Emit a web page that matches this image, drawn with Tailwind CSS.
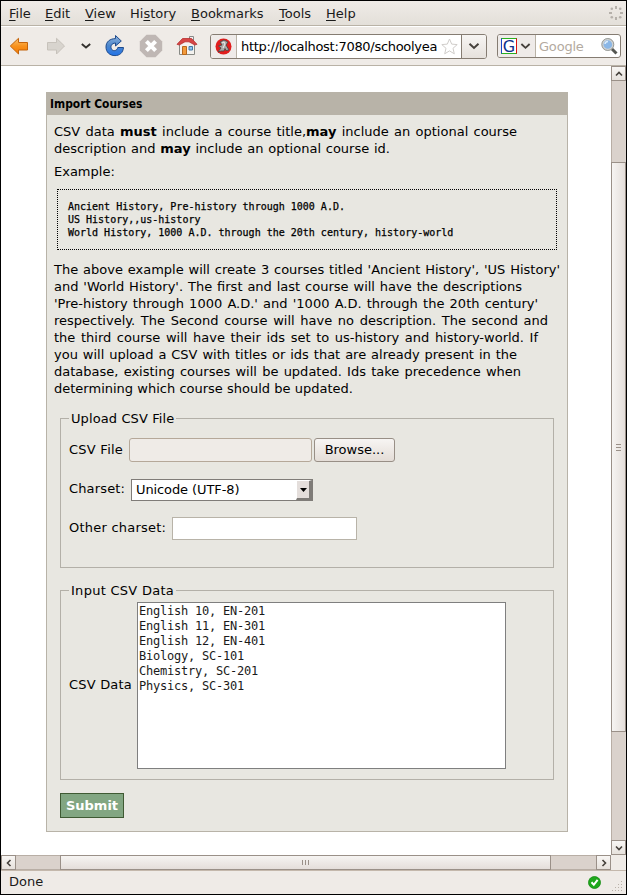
<!DOCTYPE html>
<html lang="en">
<head>
<meta charset="utf-8">
<title>Import Courses</title>
<script src="https://cdn.jsdelivr.net/npm/@tailwindcss/browser@4"></script>
</head>
<body class="w-[627px] h-[895px] overflow-hidden bg-white text-black text-[13px] leading-[17px] font-['DejaVu_Sans',sans-serif]">
<div class="w-[627px] h-[895px] border border-black flex flex-col">
  <!-- Menu bar -->
  <nav class="h-[25px] shrink-0 flex items-center bg-linear-to-b from-[#efebe7] to-[#e3dfd9] border-b border-[#b9b2a6] pl-[8px] pr-[2px] text-[13px] text-[#1a1a1a]">
    <span class="w-[36px]"><u class="underline-offset-2">F</u>ile</span>
    <span class="w-[40px]"><u class="underline-offset-2">E</u>dit</span>
    <span class="w-[45px]"><u class="underline-offset-2">V</u>iew</span>
    <span class="w-[61px]">Hi<u class="underline-offset-2">s</u>tory</span>
    <span class="w-[88px]"><u class="underline-offset-2">B</u>ookmarks</span>
    <span class="w-[47px]"><u class="underline-offset-2">T</u>ools</span>
    <span><u class="underline-offset-2">H</u>elp</span>
    <svg class="ml-auto" width="16" height="16" viewBox="0 0 16 16" fill="#b5b0aa"><rect x="7" y="1" width="2" height="3"/><rect x="7" y="12" width="2" height="3"/><rect x="1" y="7" width="3" height="2"/><rect x="12" y="7" width="3" height="2"/><circle cx="3.8" cy="3.8" r="1.3"/><circle cx="12.2" cy="3.8" r="1.3"/><circle cx="3.8" cy="12.2" r="1.3"/><circle cx="12.2" cy="12.2" r="1.3"/></svg>
  </nav>
  <!-- Toolbar -->
  <div class="h-[40px] shrink-0 flex items-center bg-[#efebe7] border-t border-t-white border-b border-b-[#b9b2a6] pl-[8px]">
    <svg width="20" height="20" viewBox="0 0 20 20"><defs><linearGradient id="o" x2="0" y2="1"><stop stop-color="#fcc26b"/><stop offset=".5" stop-color="#f8921e"/><stop offset="1" stop-color="#f57900"/></linearGradient><linearGradient id="b" x2="0" y2="1"><stop stop-color="#8fb3dc"/><stop offset=".5" stop-color="#4d87cc"/><stop offset="1" stop-color="#2273e8"/></linearGradient></defs><path d="M1.3 10 9.5 2.3V6.500H18.500V14H9.500V18Z" fill="url(#o)" stroke="#c4640c" stroke-linejoin="round"/></svg>
    <svg class="ml-[17px]" width="20" height="20" viewBox="0 0 20 20"><path d="M18.500 10 10.500 2.300V6.500H1.500V14H10.500V18Z" fill="#d8d4ce" stroke="#c7c2bb" stroke-linejoin="round"/></svg>
    <svg class="ml-[14px]" width="12" height="8" viewBox="0 0 12 8"><path d="M1.800 2 6 5.500 10.200 2" fill="none" stroke="#33302d" stroke-width="1.900"/></svg>
    <svg class="ml-[12px]" width="22" height="24" viewBox="0 0 22 24"><path d="M11.500 1.500 17.300 7 11.500 12V9C7.500 9.300 6.500 12 7.200 14.300 8.300 17.700 13 17.300 13.800 13.500H19.500C19 19 15.500 21.600 11 21.600 5.500 21.600 2 18 2 13 2 7.600 6 4.700 11.500 4.600Z" fill="url(#b)" stroke="#1f4b8c" stroke-linejoin="round"/></svg>
    <svg class="ml-[13px]" width="24" height="24" viewBox="0 0 24 24"><path d="M7.500 .8h9L23.200 7.500v9L16.500 23.200h-9L.8 16.500v-9Z" fill="#bfb7b4"/><path d="m7.400 7.400 9.200 9.200m0-9.200-9.200 9.200" stroke="#fff" stroke-width="4"/></svg>
    <svg class="ml-[13px]" width="22" height="22" viewBox="0 0 22 22"><path d="M13.500 1.500h4V7h-4Z" fill="#eee" stroke="#888"/><path d="M3.500 9 11 5l7.500 4v10.500h-15Z" fill="#f4f2ef" stroke="#888a85"/><path d="M1 9.300 6.500 3.500h9L21 9.300l-2.200.7L13 6.800H9L3.200 10Z" fill="#d64545" stroke="#b93030" stroke-width=".8" stroke-linejoin="round"/><path d="M6.500 11.500h4v8h-4Z" fill="#f29a3b" stroke="#b8671a"/><path d="M13 11.500h3.500V15H13Z" fill="#8ec5ee" stroke="#4179a8"/></svg>
    <!-- Address field -->
    <div class="ml-[12px] w-[277px] h-[25px] flex items-center border border-[#857c72] rounded-[3px] bg-white">
      <div class="w-[26px] h-[23px] shrink-0 rounded-l-[2px] bg-[#efebe9] border-r border-[#b9b2a6] flex items-center justify-center">
        <svg width="17" height="17" viewBox="0 0 17 17"><circle cx="8.500" cy="8.500" r="8" fill="#e11d1d"/><path d="m5 4 4-2 4 2-2 3 3 5-3 .5-1-2-1 2.500H6l-3 1 3-4-2.500-2L7 7Z" fill="#a9aaa7" stroke="#444" stroke-width=".8"/><path d="m7 5 2-1 1 2-2 4" fill="none" stroke="#eee"/></svg>
      </div>
      <span class="pl-[4px] w-[199px] whitespace-nowrap text-[13px] tracking-[-0.3px]">http://localhost:7080/schoolyea</span>
      <svg class="ml-[5px] shrink-0" width="17" height="17" viewBox="0 0 17 17"><path d="m8.500 1 2.200 5.100 5.500.5-4.200 3.700 1.300 5.500-4.800-2.900-4.800 2.900L5 10.300.8 6.600l5.500-.5Z" fill="#fff" stroke="#d0cdca"/></svg>
      <div class="ml-auto w-[25px] h-[23px] shrink-0 rounded-r-[2px] border-l border-[#857c72] bg-linear-to-b from-[#f7f5f3] to-[#e6e1dc] flex items-center justify-center"><svg width="12" height="8" viewBox="0 0 12 8"><path d="M1.500 1.800 6 6 10.500 1.800" fill="none" stroke="#45403b" stroke-width="2"/></svg></div>
    </div>
    <!-- Search field -->
    <div class="ml-[10px] w-[124px] h-[24px] flex items-center border border-[#857c72] rounded-[3px] bg-white">
      <div class="w-[38px] h-[22px] shrink-0 rounded-l-[2px] bg-[#efebe9] border-r border-[#b9b2a6] flex items-center pl-[3px]">
        <span class="w-[16px] h-[16px] bg-white border border-t-[#2ab01f] border-b-[#2ab01f] border-l-[#1a48c8] border-r-[#dd1111] text-[#10308c] text-[16px] leading-[15px] text-center flex justify-center">G</span>
        <svg class="ml-[3px]" width="11" height="8" viewBox="0 0 12 8"><path d="M1.500 1.800 6 6 10.500 1.800" fill="none" stroke="#45403b" stroke-width="2"/></svg>
      </div>
      <span class="pl-[3px] text-[13px] tracking-[-0.2px] text-[#b3aaa0]">Google</span>
      <svg class="ml-auto mr-[2px]" width="17" height="17" viewBox="0 0 17 17"><path d="m10.500 10.500 5 5" stroke="#555753" stroke-width="3"/><circle cx="6.800" cy="6.500" r="5.300" fill="#8bb7e6" stroke="#cfd2d3" stroke-width="2"/><circle cx="6.800" cy="6.500" r="6" fill="none" stroke="#888a85" stroke-width=".8"/><path d="M4 6a3 3 0 0 1 3-2.500" fill="none" stroke="#dcecfb" stroke-width="1.500"/></svg>
    </div>
  </div>
  <!-- Viewport -->
  <div class="h-[789px] shrink-0 flex">
    <main class="w-[610px] h-[789px] overflow-hidden pt-[26px] pl-[45px]">
      <section class="w-[522px] h-[740px] bg-[#e8e7e1] border border-[#b8b3a8]">
        <h1 class="h-[22px] bg-[#b8b3a8] pl-[3px] text-[13px] leading-[22px] font-bold font-['DejaVu_Sans_Condensed','DejaVu_Sans',sans-serif]"><span class="inline-block origin-left scale-x-[.915]">Import Courses</span></h1>
        <div class="pl-[7px] pt-[8px]">
          <p class="whitespace-nowrap"><span class="block w-[463px] [text-align-last:justify]">CSV data <b>must</b> include a course title,<b>may</b> include an optional course</span><span class="block w-[336px] [text-align-last:justify]">description and <b>may</b> include an optional course id.</span></p>
          <p class="mt-[6px]">Example:</p>
          <pre class="mt-[9px] ml-[3px] w-[500px] h-[61px] border border-dotted border-black p-[10px] text-[10px] leading-[13px] font-['DejaVu_Sans_Mono',monospace] [-webkit-text-stroke:0.25px_black]">Ancient History, Pre-history through 1000 A.D.
US History,,us-history
World History, 1000 A.D. through the 20th century, history-world</pre>
          <p class="mt-[11px] whitespace-nowrap"><span class="block w-[506px] [text-align-last:justify]">The above example will create 3 courses titled 'Ancient History', 'US History'</span><span class="block w-[468px] [text-align-last:justify]">and 'World History'. The first and last course will have the descriptions</span><span class="block w-[484px] [text-align-last:justify]">'Pre-history through 1000 A.D.' and '1000 A.D. through the 20th century'</span><span class="block w-[494px] [text-align-last:justify]">respectively. The Second course will have no description. The second and</span><span class="block w-[484px] [text-align-last:justify]">the third course will have their ids set to us-history and history-world. If</span><span class="block w-[463px] [text-align-last:justify]">you will upload a CSV with titles or ids that are already present in the</span><span class="block w-[467px] [text-align-last:justify]">database, existing courses will be updated. Ids take precedence when</span><span class="block w-[299px] [text-align-last:justify]">determining which course should be updated.</span></p>
        </div>
        <fieldset class="ml-[13px] mt-[13px] w-[494px] h-[158px] border border-[#b3b0a8] pl-[8px]">
          <legend class="px-[2px] h-[17px] tracking-[0.1px]">Upload CSV File</legend>
          <div class="mt-[11px] h-[23px] flex items-center">
            <label class="w-[60px] tracking-[0.25px]">CSV File</label>
            <div class="w-[183px] h-[24px] border border-[#b5a899] rounded-[3px] bg-[#efebe7]"></div>
            <button class="ml-[2px] w-[81px] h-[24px] border border-[#988f86] rounded-[3px] bg-linear-to-b from-[#f7f5f3] to-[#e4ddd7] text-[13px]">Browse...</button>
          </div>
          <div class="mt-[18px] h-[22px] flex items-center">
            <label class="w-[62px] tracking-[0.15px] pb-[3px]">Charset:</label>
            <div class="w-[182px] h-[22px] border border-[#7f7c78] bg-white flex justify-between pl-[4px]">
              <span class="leading-[20px] tracking-[-0.1px]">Unicode (UTF-8)</span>
              <span class="w-[16px] h-[20px] bg-[#e4dedb] border-t border-l border-white border-r-[3px] border-b-2 border-r-[#7f7c78] border-b-[#7f7c78] flex items-center justify-center"><svg width="7" height="4" viewBox="0 0 7 4"><path d="M0 0h7L3.500 4Z"/></svg></span>
            </div>
          </div>
          <div class="mt-[16px] h-[23px] flex items-center">
            <label class="w-[103px] tracking-[0.23px] pb-[2px]">Other charset:</label>
            <div class="w-[185px] h-[23px] border border-[#b8b3a8] bg-white"></div>
          </div>
        </fieldset>
        <fieldset class="ml-[13px] mt-[14px] w-[494px] h-[198px] border border-[#b3b0a8] pl-[8px]">
          <legend class="px-[2px] h-[17px] tracking-[0.28px]">Input CSV Data</legend>
          <div class="mt-[3px] h-[167px] flex items-center">
            <label class="w-[68px] tracking-[0.2px] pb-[2px]">CSV Data</label>
            <pre class="w-[369px] h-[167px] border border-[#7f7f7f] bg-white pl-[1px] pt-px text-[12px] leading-[15px] tracking-[-0.22px] text-[#1a1a1a] font-['DejaVu_Sans_Mono',monospace]">English 10, EN-201
English 11, EN-301
English 12, EN-401
Biology, SC-101
Chemistry, SC-201
Physics, SC-301</pre>
          </div>
        </fieldset>
        <button class="block ml-[13px] mt-[13px] w-[64px] h-[25px] border border-[#3f5a33] bg-[#82a682] text-white font-bold text-[13px]">Submit</button>
      </section>
    </main>
    <!-- Vertical scrollbar -->
    <div class="w-[15px] h-[789px] bg-[#dad2cc] border-l border-[#b8aea5] flex flex-col">
      <div class="h-[15px] -ml-px border border-[#9a9088] bg-linear-to-b from-[#f8f6f4] to-[#e6e1dc] flex items-center justify-center"><svg width="8" height="6" viewBox="0 0 8 6"><path d="M1 4.500 4 1.500 7 4.500" fill="none" stroke="#45403b" stroke-width="1.600"/></svg></div>
      <div class="mt-[81px] h-[570px] -ml-px border border-[#9a9088] bg-linear-to-r from-[#f6f4f2] to-[#e4deda] flex flex-col items-center justify-center gap-[2px]"><i class="w-[5px] h-px bg-[#9a9088]"></i><i class="w-[5px] h-px bg-[#9a9088]"></i><i class="w-[5px] h-px bg-[#9a9088]"></i></div>
      <div class="mt-auto h-[15px] -ml-px border border-[#9a9088] bg-linear-to-b from-[#f8f6f4] to-[#e6e1dc] flex items-center justify-center"><svg width="8" height="6" viewBox="0 0 8 6"><path d="M1 1.500 4 4.500 7 1.500" fill="none" stroke="#45403b" stroke-width="1.600"/></svg></div>
    </div>
  </div>
  <!-- Horizontal scrollbar -->
  <div class="h-[15px] shrink-0 flex bg-[#efebe7]">
    <div class="w-[610px] h-[15px] bg-[#dad2cc] border-y border-[#b8aea5] flex">
      <div class="w-[15px] h-[15px] -mt-px shrink-0 border border-[#9a9088] bg-linear-to-b from-[#f8f6f4] to-[#e6e1dc] flex items-center justify-center"><svg width="6" height="8" viewBox="0 0 6 8"><path d="M4.500 1 1.500 4 4.500 7" fill="none" stroke="#45403b" stroke-width="1.600"/></svg></div>
      <div class="ml-[44px] w-[491px] h-[15px] -mt-px border border-[#9a9088] bg-linear-to-b from-[#f6f4f2] to-[#e4deda] flex items-center justify-center gap-[2px]"><i class="h-[5px] w-px bg-[#9a9088]"></i><i class="h-[5px] w-px bg-[#9a9088]"></i><i class="h-[5px] w-px bg-[#9a9088]"></i></div>
      <div class="ml-auto w-[15px] h-[15px] -mt-px shrink-0 border border-[#9a9088] bg-linear-to-b from-[#f8f6f4] to-[#e6e1dc] flex items-center justify-center"><svg width="6" height="8" viewBox="0 0 6 8"><path d="M1.500 1 4.500 4 1.500 7" fill="none" stroke="#45403b" stroke-width="1.600"/></svg></div>
    </div>
  </div>
  <!-- Status bar -->
  <footer class="flex-1 bg-[#efebe7] border-t border-[#c4b8ac] flex items-center pl-[8px]">
    <span class="text-[#1a1a1a] pb-[2px]">Done</span>
    <svg class="ml-auto" width="13" height="13" viewBox="0 0 13 13"><circle cx="6.500" cy="6.500" r="6" fill="#1fa81c" stroke="#128a10" stroke-width=".8"/><path d="m3.500 6.300 2.300 2.500 3.800-5" fill="none" stroke="#fff" stroke-width="2"/></svg>
    <svg class="ml-[11px] mr-[2px] self-end mb-[1px]" width="12" height="12" viewBox="0 0 12 12" fill="#b9b1a8"><path d="M9 0h1v1H9ZM6 3h1v1H6ZM9 3h1v1H9ZM3 6h1v1H3ZM6 6h1v1H6ZM9 6h1v1H9ZM0 9h1v1H0ZM3 9h1v1H3ZM6 9h1v1H6ZM9 9h1v1H9Z"/></svg>
  </footer>
</div>
</body>
</html>
